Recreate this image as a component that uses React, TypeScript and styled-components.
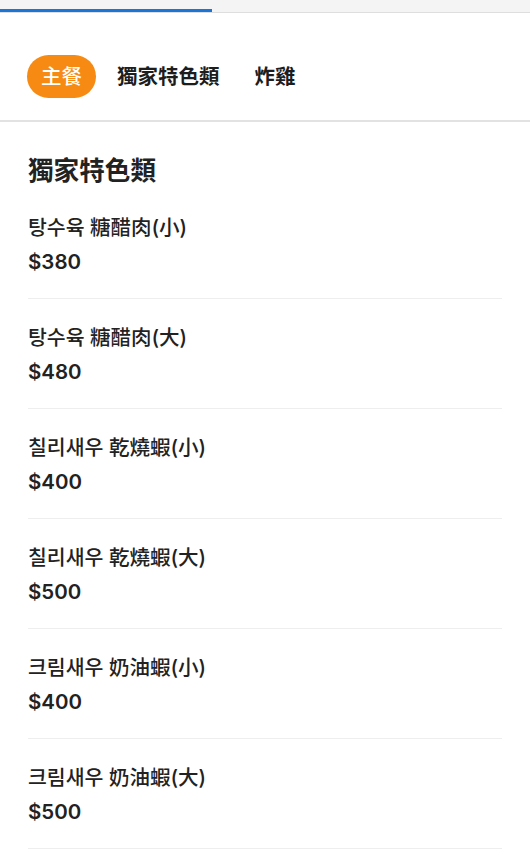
import styled, { createGlobalStyle } from 'styled-components';

const GlobalStyle = createGlobalStyle`
  html, body {
    margin: 0;
    padding: 0;
    background: #ffffff;
  }

  body {
    font-family: Inter, 'Noto Sans CJK TC', 'Noto Sans CJK KR', sans-serif;
    color: #222222;
  }
`;

type MenuItem = {
  name: string;
  price: number;
};

const TABS = ['主餐', '獨家特色類', '炸雞'];

const ITEMS: MenuItem[] = [
  { name: '탕수육 糖醋肉(小)', price: 380 },
  { name: '탕수육 糖醋肉(大)', price: 480 },
  { name: '칠리새우 乾燒蝦(小)', price: 400 },
  { name: '칠리새우 乾燒蝦(大)', price: 500 },
  { name: '크림새우 奶油蝦(小)', price: 400 },
  { name: '크림새우 奶油蝦(大)', price: 500 },
];

const App = () => {
  const progress = 40;

  return (
    <>
      <GlobalStyle />
      <Page>
        <ProgressTrack>
          <ProgressBar style={{ width: `${progress}%` }} />
        </ProgressTrack>
        <TabBar>
          {TABS.map((tab, index) => (
            <Tab key={tab} $active={index === 0}>
              {tab}
            </Tab>
          ))}
        </TabBar>
        <Section>
          <SectionTitle>獨家特色類</SectionTitle>
          <ItemList>
            {ITEMS.map((item) => (
              <Item key={item.name}>
                <ItemName>{item.name}</ItemName>
                <ItemPrice>${item.price}</ItemPrice>
              </Item>
            ))}
          </ItemList>
        </Section>
      </Page>
    </>
  );
};

const Page = styled.div`
  width: 530px;
  min-height: 850px;
  background: #ffffff;
  overflow: hidden;
`;

const ProgressTrack = styled.div`
  display: flex;
  align-items: flex-end;
  height: 12px;
  background: #f4f4f4;
  border-bottom: 1px solid #dedede;
`;

const ProgressBar = styled.div`
  height: 3px;
  background: #1976d8;
`;

const TabBar = styled.nav`
  display: flex;
  align-items: center;
  gap: 7px;
  padding: 42px 27px 22px;
  border-bottom: 2px solid #e2e2e2;
`;

const Tab = styled.button<{ $active: boolean }>`
  height: 43px;
  padding: 0 14px;
  border: none;
  border-radius: 22px;
  background: ${({ $active }) => ($active ? '#f68a12' : 'transparent')};
  color: ${({ $active }) => ($active ? '#ffffff' : '#1d1d1d')};
  font-family: inherit;
  font-size: 20.5px;
  font-weight: ${({ $active }) => ($active ? 500 : 600)};
  line-height: 43px;
`;

const Section = styled.section`
  padding: 31px 28px 0;
`;

const SectionTitle = styled.h2`
  margin: 0;
  font-size: 25.6px;
  font-weight: 700;
  line-height: 36px;
  color: #222222;
`;

const ItemList = styled.ul`
  margin: 0;
  padding: 0;
  list-style: none;
`;

const Item = styled.li`
  padding: 22px 0 19px;
  border-bottom: 1px solid #eeeeee;
`;

const ItemName = styled.div`
  font-size: 20.5px;
  font-weight: 500;
  line-height: 34px;
`;

const ItemPrice = styled.div`
  font-size: 20.5px;
  font-weight: 600;
  line-height: 34px;
`;

export default App;
